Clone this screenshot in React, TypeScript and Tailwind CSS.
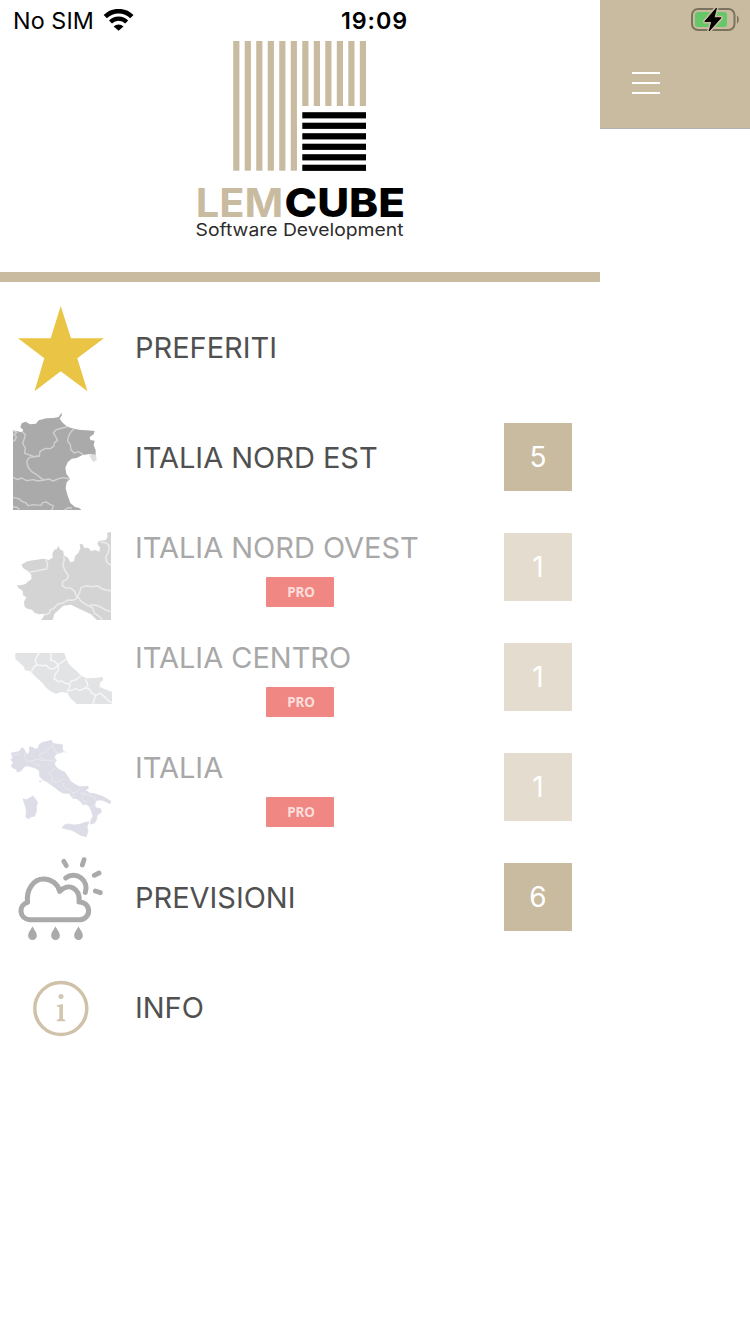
import type { ReactNode } from "react";

const sans = "font-['Inter','Liberation_Sans',sans-serif]";

function StatusLeft() {
  return (
    <div className="flex h-10 w-full items-center pt-px text-black">
      <span className="ml-[13px] w-[81px] whitespace-nowrap text-[23.3px] leading-none tracking-[0.1px]">No SIM</span>
      <svg className="ml-[9px] h-[24px] w-[32px]" viewBox="103 9 32 24">
        <g fill="none" stroke="#000" strokeWidth="4.6">
          <path d="M105.300 16.600 A19 19 0 0 1 131.900 16.600" />
          <path d="M110.500 22 A11.500 11.500 0 0 1 126.700 22" strokeWidth="4.200" />
        </g>
        <path d="M118.600 30.800 L113.700 26.400 A7 7 0 0 1 123.500 26.400 Z" />
      </svg>
      <span className="ml-[206px] whitespace-nowrap text-[23.3px] font-semibold leading-none tracking-[0.9px]">19:09</span>
    </div>
  );
}

const columns = [0, 1, 2, 3, 4, 5, 6, 7, 8, 9, 10, 11];
const bars = [0, 1, 2, 3, 4, 5];

function Logo() {
  return (
    <svg className="h-[232px] w-[600px]" viewBox="0 40 600 232">
      {columns.map((i) => (
        <rect key={i} x={233.2 + i * 11.51} y="41" width="6.200" height={i < 6 ? 129.7 : 65} fill="#c9bb9f" />
      ))}
      {bars.map((i) => (
        <rect key={i} x="302.300" y={112.2 + i * 10.5} width="63.700" height="6.200" fill="#000" />
      ))}
      <g fontFamily="Inter, 'Liberation Sans', sans-serif">
        <text x="195.800" y="217.300" fontSize="40.300" fontWeight="700" fill="#c9bb9f" textLength="87.500" lengthAdjust="spacingAndGlyphs">LEM</text>
        <text x="284.500" y="217.300" fontSize="40.300" fontWeight="800" fill="#000" textLength="120.500" lengthAdjust="spacingAndGlyphs">CUBE</text>
        <text x="195.500" y="235.900" fontSize="17.500" fill="#2c2c2c" textLength="208" lengthAdjust="spacingAndGlyphs">Software Development</text>
      </g>
    </svg>
  );
}

function Art({ top, children }: { top: number; children: ReactNode }) {
  return (
    <svg className="h-[110px] w-[136px] shrink-0" viewBox={`0 ${top} 136 110`}>
      {children}
    </svg>
  );
}

const star = (
  <Art top={292}>
    <path fill="#eac545" d="M60.700 306 L71 338.300 H104 L77.300 358.300 L87.500 391.300 L60.700 371.300 L34.500 391.300 L44.300 358.300 L18 338.300 H50.700 Z" />
  </Art>
);

const northEast = (
  <Art top={402}>
    <g transform="translate(0 400) scale(.33333)">
      <path fill="#dedede" d="M268 164 L288 163 L290 181 L280 186 L274 178 Z" />
      <path
        fill="#aaaaaa"
        d="M39 92 L52 94 L66 97 L70 90 L61 82 L65 70 L77 65 L90 73 L108 71 L116 61 L139 55 L161 54 L176 51 L184 39 L186 45 L179 56 L188 68 L202 80 L222 86 L242 90 L261 91 L284 93 L281 103 L269 111 L271 120 L284 122 L281 136 L287 151 L287 164 L270 162 L248 165 L230 174 L215 176 L203 187 L196 203 L199 221 L210 237 L200 247 L197 265 L203 287 L211 309 L225 321 L238 324 L244 330 H39 Z"
      />
      <g fill="none" stroke="#d0d0d0" strokeWidth="4.200" strokeLinejoin="round">
        <path d="M68 96 L76 104 L72 119 L68 130 L76 144 L74 160 L90 165 L102 170 L118 168 L120 154 L136 145 L151 146 L161 139 L164 127 L173 121 L166 109 L160 98 L169 89 L187 84 L203 80" />
        <path d="M39 92 L51 97 L41 103 L49 110 L46 120 L39 123" />
        <path d="M118 168 L88 172 L80 184 L84 201 L95 215 L110 224 L125 236 L133 240" />
        <path d="M222 86 L210 99 L204 114 L203 123 L211 134 L213 149 L222 159 L235 155 L246 161 L248 165" />
        <path d="M39 232 L52 239 L65 234 L80 242 L100 239 L114 243 L132 240 L146 237 L160 243 L176 236 L190 233 L210 237" />
        <path d="M39 292 L56 296 L66 304 L78 309 L84 317 L99 314 L123 316 L128 308 L140 306 L149 313 L160 317 L156 330 M39 321 L49 321 L58 328 M193 330 L205 323 L216 324" />
      </g>
    </g>
  </Art>
);

const northWest = (
  <Art top={512}>
    <g transform="translate(0 520) scale(.33333)">
      <path
        fill="#d4d4d4"
        d="M333 36 L321 38 L323 49 L318 60 L296 63 L292 72 L300 83 L298 95 L286 90 L273 93 L265 83 L253 84 L248 73 L239 72 L241 85 L235 99 L225 108 L222 124 L211 127 L204 113 L191 106 L190 94 L180 88 L176 78 L170 87 L163 89 L157 101 L158 113 L146 120 L130 116 L104 120 L82 124 L64 134 L70 145 L84 153 L94 164 L94 178 L83 185 L77 192 L64 195 L51 196 L56 205 L68 212 L69 225 L79 232 L72 245 L74 261 L84 267 L96 269 L104 279 L119 283 L133 281 L130 292 L123 300 H158 L163 282 L176 270 L190 257 L213 254 L233 264 L252 273 L273 283 L287 296 L291 300 H333 Z"
      />
      <g fill="none" stroke="#ebebeb" strokeWidth="4.500" strokeLinejoin="round">
        <path d="M88 156 L106 154 L125 149 L140 147 L143 134 L138 119" />
        <path d="M191 109 L193 120 L188 134 L195 152 L206 168 L200 178 L188 184 L187 197 L197 204 L214 205 L224 214 L229 229 L237 234 L242 243 L262 256 L278 264 L284 280 L300 291 L307 300" />
        <path d="M133 285 L148 280 L150 270 L160 266 L173 253 L190 248 L205 240 L219 241 L230 235 L239 217 L243 203 L260 197 L276 200 L293 198 L309 208 L333 213" />
        <path d="M268 256 L286 255 L302 261 L315 269 L333 275 M301 66 L319 69 L328 77 L325 98 L317 112 L321 127 L333 136" />
      </g>
    </g>
  </Art>
);

const centre = (
  <Art top={622}>
    <g transform="translate(0 640) scale(.33333)">
      <path
        fill="#e2e3e4"
        d="M46 39 H193 L199 57 L206 72 L218 83 L232 95 L243 107 L261 115 L284 114 L307 111 L310 119 L300 128 L299 140 L315 148 L336 155 V192 H230 L222 184 L211 175 L202 158 L185 156 L167 161 L151 154 L137 142 L127 128 L111 115 L99 102 L90 93 L74 91 L73 81 L62 71 L53 63 L46 57 Z"
      />
      <g fill="none" stroke="#f6f6f6" strokeWidth="4.500" strokeLinejoin="round">
        <path d="M118 39 L110 51 L105 60 L110 74 L101 82 L94 94 M110 74 L127 77 L139 76 L151 87 L165 85 L174 73 L163 64 L151 61 L154 47 L151 39" />
        <path d="M174 73 L189 65 L199 57 M176 75 L174 92 L165 104 L163 117 L176 125 L187 123 L196 130 L207 132 L214 123 L227 120 L242 108" />
        <path d="M211 132 L208 142 L202 153 L216 151 L226 146 L239 152 L255 144 L264 138 L260 125 L256 116 M255 144 L268 147 L274 158 L287 166 L282 180 L279 192 M287 166 L301 160 L317 173 L327 184 L336 188" />
      </g>
    </g>
  </Art>
);

const italy = (
  <Art top={732}>
    <g transform="translate(0 730) scale(.33333)">
      <g fill="#dddde7" stroke="#dddde7" strokeWidth="2" strokeLinejoin="round">
        <path d="M32 90 L38 84 L34 69 L48 66 L57 65 L64 55 L69 53 L76 65 L82 75 L88 66 L89 50 L97 52 L106 57 L114 55 L118 43 L129 37 L142 34 L155 31 L158 40 L174 43 L188 44 L187 53 L190 66 L178 69 L167 73 L163 83 L169 91 L163 101 L169 112 L181 121 L194 126 L203 139 L211 153 L223 162 L239 170 L264 169 L265 175 L257 180 L268 189 L284 191 L307 199 L324 208 L333 214 L330 221 L319 216 L306 210 L290 211 L284 222 L287 233 L302 236 L304 247 L291 256 L290 269 L282 280 L271 282 L273 270 L279 259 L274 242 L267 228 L257 222 L250 225 L241 214 L230 206 L218 205 L208 190 L192 190 L181 185 L166 174 L153 164 L143 157 L128 149 L119 139 L118 122 L107 115 L95 111 L82 107 L72 111 L63 123 L52 126 L48 117 L38 114 L34 106 L40 97 Z" />
        <path d="M69 207 L80 209 L92 202 L99 198 L107 208 L113 218 L109 230 L109 246 L103 259 L93 260 L87 266 L77 262 L79 247 L78 235 L74 222 Z" />
        <path d="M186 293 L194 284 L208 282 L222 285 L239 283 L256 277 L267 275 L261 290 L264 303 L259 320 L244 317 L229 308 L213 300 L199 297 Z" />
        <path d="M118 153 h6 v2 h-6 Z M195 64 l2 4 Z" />
      </g>
      <g fill="none" stroke="#e9e9f0" strokeWidth="2.500">
        <path d="M39 73 L53 75 L58 68 M75 67 L74 82 L83 95 L95 92 L112 88 L129 92 L151 91 L165 94 M93 93 L104 101 L121 107 M119 72 L120 83 L137 90 M119 72 L132 68 L148 56 L159 50 L160 40 M164 53 L163 65 L177 69" />
        <path d="M145 132 L155 121 L165 115 M145 132 L158 137 L155 151 L151 161 M158 154 L171 157 L185 151 L191 145 M187 157 L195 176 L212 180 L218 188 L230 186 L240 175 M222 202 L219 190 M240 187 L249 192 L257 185 M249 192 L245 206 L260 219 M249 192 L267 195 L282 202 L289 213 M270 232 L286 227" />
      </g>
    </g>
  </Art>
);

const forecast = (
  <Art top={842}>
    <g transform="translate(0 850) scale(.33333)">
      <g fill="none" stroke="#aaaaaa" strokeWidth="15" strokeLinecap="round" strokeLinejoin="round">
        <path d="M90 209 A26.500 26.500 0 0 1 84.500 157 C80 120 101 87 132 87 C154 87 173 101 179 124 C204 97 240 114 236 156 A26.500 26.500 0 0 1 239 209 Z" transform="translate(-3.500 0) scale(1.020 1)" />
        <path d="M197 84 A38 38 0 0 1 256 127" />
      </g>
      <g fill="none" stroke="#aaaaaa" strokeWidth="14.500" strokeLinecap="round">
        <path d="M191.500 34 L199 47 M252 29 L247 45 M297 69 L283 76 M286 123 L301 128" />
      </g>
      <g fill="#aaaaaa">
        {[97.5, 166.5, 235.5].map((x) => (
          <path key={x} transform={`translate(${x} 229)`} d="M0 0 C4 10 13 17 13 28 A13 13 0 0 1 -13 28 C-13 17 -4 10 0 0 Z" />
        ))}
      </g>
    </g>
  </Art>
);

const info = (
  <Art top={952}>
    <circle cx="60.800" cy="1008.500" r="26" fill="none" stroke="#cfc2a8" strokeWidth="3.500" />
    <circle cx="61" cy="996.500" r="2.500" fill="#d3c7af" />
    <path fill="#d3c7af" d="M56.800 1005.300 L63 1004 V1018.800 L65.200 1020 V1021.300 H56.800 V1020 L59.300 1018.800 V1007 L56.800 1006.500 Z" />
  </Art>
);

type Item = { label: string; art: ReactNode; count?: number; pro?: boolean };

const items: Item[] = [
  { label: "PREFERITI", art: star },
  { label: "ITALIA NORD EST", art: northEast, count: 5 },
  { label: "ITALIA NORD OVEST", art: northWest, count: 1, pro: true },
  { label: "ITALIA CENTRO", art: centre, count: 1, pro: true },
  { label: "ITALIA", art: italy, count: 1, pro: true },
  { label: "PREVISIONI", art: forecast, count: 6 },
  { label: "INFO", art: info },
];

function Row({ item }: { item: Item }) {
  return (
    <li className="flex h-[110px] items-center pr-7">
      {item.art}
      <div className={item.pro ? "flex h-full flex-1 flex-col pt-4" : "flex-1 pt-0.5"}>
        <span className={`-ml-px block h-10 whitespace-nowrap text-[29px] leading-10 tracking-[-0.02px] ${item.pro ? "text-[#a8a8a8]" : "text-[#505050]"}`}>
          {item.label}
        </span>
        {item.pro && (
          <span className="ml-[130px] mt-[9px] flex h-[30px] w-[68px] items-center justify-center rounded-[1px] bg-[#f08782] pl-0.5 pt-px font-['Noto_Sans','Open_Sans',sans-serif] text-[13.5px] font-bold tracking-[-0.2px] text-[#fbdedc]">
            PRO
          </span>
        )}
      </div>
      {item.count !== undefined && (
        <span className={`flex size-[68px] items-center justify-center text-[28px] text-white ${item.pro ? "bg-[#e4dccf]" : "bg-[#c9bb9f]"}`}>
          {item.count}
        </span>
      )}
    </li>
  );
}

function Battery() {
  return (
    <svg className="h-10 w-[62px]" viewBox="688 0 62 40">
      <rect x="692" y="9" width="42.500" height="21" rx="6" fill="none" stroke="#7c735f" strokeWidth="2" />
      <path fill="#7c735f" d="M737 15.500 C739.300 16.500 739.300 22.500 737 23.500 Z" />
      <rect x="695" y="12" width="32" height="15" rx="3" fill="#65c768" />
      <path d="M716.500 8 L704.800 21.500 H711.800 L709.200 31 L721 17.800 H714 Z" fill="#000" stroke="#c9bb9f" strokeWidth="4" paintOrder="stroke" strokeLinejoin="round" />
      <path d="M716.500 8 L704.800 21.500 H711.800 L709.200 31 L721 17.800 H714 Z" fill="#000" stroke="#000" strokeWidth="0.800" strokeLinejoin="round" />
    </svg>
  );
}

export default function App() {
  return (
    <div className={`flex h-[1334px] w-[750px] overflow-hidden bg-white ${sans}`}>
      <aside className="flex w-[600px] flex-col">
        <header className="flex h-[282px] flex-col border-b-[10px] border-[#c9bb9f]">
          <StatusLeft />
          <Logo />
        </header>
        <ul className="pt-[10px]">
          {items.map((item) => (
            <Row key={item.label} item={item} />
          ))}
        </ul>
      </aside>
      <main className="w-[150px]">
        <div className="flex h-[129px] flex-col border-b border-[#b2b2b2] bg-[#c9bb9f]">
          <div className="flex justify-end">
            <Battery />
          </div>
          <div className="ml-8 mt-8 flex w-7 flex-col gap-2">
            <span className="h-0.5 bg-white" />
            <span className="h-0.5 bg-white" />
            <span className="h-0.5 bg-white" />
          </div>
        </div>
      </main>
    </div>
  );
}
